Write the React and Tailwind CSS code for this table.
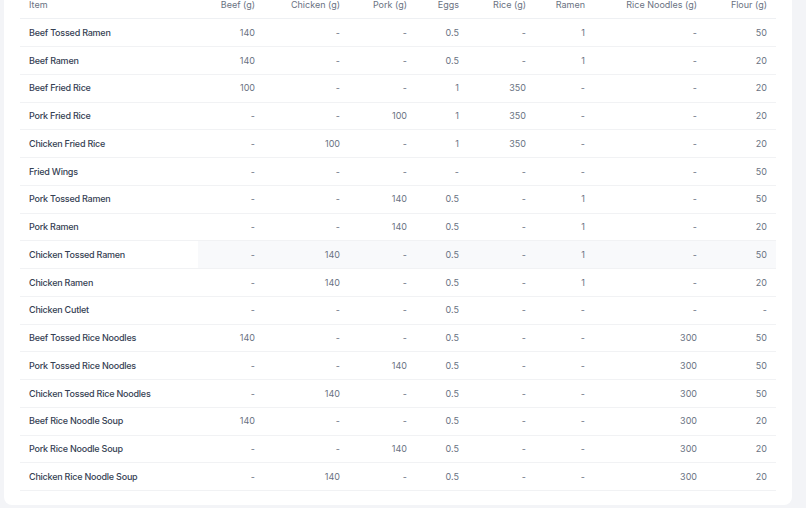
const cols = [
  { label: "Beef (g)", w: "w-[66px]" },
  { label: "Chicken (g)", w: "w-[85px]" },
  { label: "Pork (g)", w: "w-[67px]" },
  { label: "Eggs", w: "w-[52px]" },
  { label: "Rice (g)", w: "w-[67px]" },
  { label: "Ramen", w: "w-[59px]" },
  { label: "Rice Noodles (g)", w: "w-[112px]" },
  { label: "Flour (g)", w: "w-[70px]" },
];

const rows = [
  ["Beef Tossed Ramen", "140", "-", "-", "0.5", "-", "1", "-", "50"],
  ["Beef Ramen", "140", "-", "-", "0.5", "-", "1", "-", "20"],
  ["Beef Fried Rice", "100", "-", "-", "1", "350", "-", "-", "20"],
  ["Pork Fried Rice", "-", "-", "100", "1", "350", "-", "-", "20"],
  ["Chicken Fried Rice", "-", "100", "-", "1", "350", "-", "-", "20"],
  ["Fried Wings", "-", "-", "-", "-", "-", "-", "-", "50"],
  ["Pork Tossed Ramen", "-", "-", "140", "0.5", "-", "1", "-", "50"],
  ["Pork Ramen", "-", "-", "140", "0.5", "-", "1", "-", "20"],
  ["Chicken Tossed Ramen", "-", "140", "-", "0.5", "-", "1", "-", "50"],
  ["Chicken Ramen", "-", "140", "-", "0.5", "-", "1", "-", "20"],
  ["Chicken Cutlet", "-", "-", "-", "0.5", "-", "-", "-", "-"],
  ["Beef Tossed Rice Noodles", "140", "-", "-", "0.5", "-", "-", "300", "50"],
  ["Pork Tossed Rice Noodles", "-", "-", "140", "0.5", "-", "-", "300", "50"],
  ["Chicken Tossed Rice Noodles", "-", "140", "-", "0.5", "-", "-", "300", "50"],
  ["Beef Rice Noodle Soup", "140", "-", "-", "0.5", "-", "-", "300", "20"],
  ["Pork Rice Noodle Soup", "-", "-", "140", "0.5", "-", "-", "300", "20"],
  ["Chicken Rice Noodle Soup", "-", "140", "-", "0.5", "-", "-", "300", "20"],
];

const App = () => {
  return (
    <div className="min-h-screen bg-[#f3f4f7] pl-1 pb-[5px] font-['Inter',sans-serif]">
      <div className="-mt-[24px] w-[788px] rounded-lg bg-white px-4 pt-4 pb-[14px]">
        <table className="table-fixed border-collapse w-[756px] text-[9px]">
          <thead>
            <tr className="h-[26.75px] border-b border-[#eef0f3]">
              <th className="w-[178px] px-[9px] text-left font-normal text-gray-500">
                Item
              </th>
              {cols.map((c) => (
                <th
                  key={c.label}
                  className={`${c.w} px-[9px] text-right font-normal text-gray-500`}
                >
                  {c.label}
                </th>
              ))}
            </tr>
          </thead>
          <tbody>
            {rows.map((r, i) => {
              const hover = r[0] === "Chicken Tossed Ramen";
              return (
                <tr key={i} className="h-[27.75px] border-b border-[#f1f2f4]">
                  <td className="bg-white px-[9px] font-medium tracking-tight text-gray-700">
                    {r[0]}
                  </td>
                  {r.slice(1).map((v, j) => (
                    <td
                      key={j}
                      className={
                        hover
                          ? "bg-[#f8f9fb] px-[9px] text-right text-gray-500"
                          : "px-[9px] text-right text-gray-500"
                      }
                    >
                      {v}
                    </td>
                  ))}
                </tr>
              );
            })}
          </tbody>
        </table>
      </div>
    </div>
  );
};

export default App;
